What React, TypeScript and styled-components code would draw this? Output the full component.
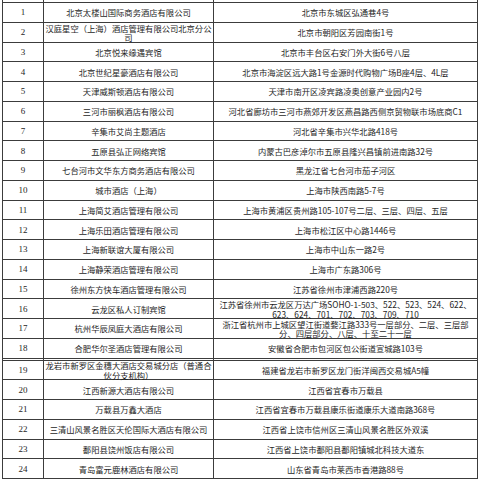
import styled, { createGlobalStyle } from "styled-components";

const GlobalStyle = createGlobalStyle`
  html, body {
    margin: 0;
    padding: 0;
    background: #ffffff;
  }
  body {
    font-family: "Noto Sans CJK SC", "Liberation Sans", sans-serif;
    color: #1e1e1e;
  }
`;

type Hotel = {
  no: number;
  name: string[];
  addr: string[];
};

const hotels: Hotel[] = [
  { no: 1, name: ["北京太楼山国际商务酒店有限公司"], addr: ["北京市东城区弘通巷4号"] },
  { no: 2, name: ["汉庭星空（上海）酒店管理有限公司北京分公", "司"], addr: ["北京市朝阳区芳园南街1号"] },
  { no: 3, name: ["北京悦来缘遇宾馆"], addr: ["北京市丰台区右安门外大街6号八层"] },
  { no: 4, name: ["北京世纪星豪酒店有限公司"], addr: ["北京市海淀区远大路1号金源时代购物广场B座4层、4L层"] },
  { no: 5, name: ["天津威斯顿酒店有限公司"], addr: ["天津市南开区凌宾路凌奥创意产业园内2号"] },
  { no: 6, name: ["三河市丽枫酒店有限公司"], addr: ["河北省廊坊市三河市燕郊开发区燕昌路西侧京贸物联市场底商C1"] },
  { no: 7, name: ["辛集市艾尚主题酒店"], addr: ["河北省辛集市兴华北路418号"] },
  { no: 8, name: ["五原县弘正网络宾馆"], addr: ["内蒙古巴彦淖尔市五原县隆兴昌镇前进南路32号"] },
  { no: 9, name: ["七台河市文华东方商务酒店有限公司"], addr: ["黑龙江省七台河市茄子河区"] },
  { no: 10, name: ["城市酒店（上海）"], addr: ["上海市陕西南路5-7号"] },
  { no: 11, name: ["上海简艾酒店管理有限公司"], addr: ["上海市黄浦区贵州路105-107号二层、三层、四层、五层"] },
  { no: 12, name: ["上海乐田酒店管理有限公司"], addr: ["上海市松江区中心路1446号"] },
  { no: 13, name: ["上海新联谊大厦有限公司"], addr: ["上海市中山东一路2号"] },
  { no: 14, name: ["上海静荣酒店管理有限公司"], addr: ["上海市广东路306号"] },
  { no: 15, name: ["徐州东方快车酒店管理有限公司"], addr: ["江苏省徐州市津浦西路220号"] },
  {
    no: 16,
    name: ["云龙区私人订制宾馆"],
    addr: ["江苏省徐州市云龙区万达广场SOHO-1-503、522、523、524、622、", "623、624、701、702、703、709、710"],
  },
  {
    no: 17,
    name: ["杭州华辰凤庭大酒店有限公司"],
    addr: ["浙江省杭州市上城区望江街道婺江路333号一层部分、二层、三层部", "分、四层部分、八层、十至二十一层"],
  },
  { no: 18, name: ["合肥华尔圣酒店管理有限公司"], addr: ["安徽省合肥市包河区包公街道宣城路103号"] },
  {
    no: 19,
    name: ["龙岩市新罗区金穗大酒店交易城分店（普通合", "伙分支机构）"],
    addr: ["福建省龙岩市新罗区龙门街洋闽西交易城A5幢"],
  },
  { no: 20, name: ["江西新源大酒店有限公司"], addr: ["江西省宜春市万载县"] },
  { no: 21, name: ["万载县万鑫大酒店"], addr: ["江西省宜春市万载县康乐街道康乐大道南路368号"] },
  { no: 22, name: ["三清山风景名胜区天伦国际大酒店有限公司"], addr: ["江西省上饶市信州区三清山风景名胜区外双溪"] },
  { no: 23, name: ["鄱阳县饶州饭店有限公司"], addr: ["江西省上饶市鄱阳县鄱阳镇城北科技大道东"] },
  { no: 24, name: ["青岛富元鹿林酒店有限公司"], addr: ["山东省青岛市莱西市香港路88号"] },
];

const Sheet = styled.div`
  display: grid;
  grid-template-columns: 41px 170px 264px;
  margin-left: 2px;
  border-left: 1px solid #3c3c3c;
  width: 476px;
`;

const Cell = styled.div<{ $h: number; $double?: boolean }>`
  box-sizing: border-box;
  height: ${(p) => p.$h}px;
  border-right: 1px solid #3c3c3c;
  border-bottom: ${(p) => (p.$double ? "3px double #3c3c3c" : "1px solid #3c3c3c")};
  display: flex;
  flex-direction: column;
  align-items: center;
  justify-content: center;
  overflow: visible;
`;

const Num = styled.span`
  font-family: "Liberation Serif", "DejaVu Serif", serif;
  font-size: 9px;
  line-height: 10px;
  color: #1e1e1e;
`;

const Line = styled.span<{ $tight?: boolean }>`
  display: block;
  font-size: 8.3px;
  line-height: 10px;
  height: ${(p) => (p.$tight ? "9.4px" : "10px")};
  white-space: nowrap;
  color: #1e1e1e;
`;

const ROW = 19.75;

export default function App() {
  return (
    <>
      <GlobalStyle />
      <Sheet>
        <Cell $h={3} />
        <Cell $h={3} />
        <Cell $h={3} />
        {hotels.map((h) => {
          const dbl = h.no === 18;
          const hh = dbl ? ROW + 2 : ROW;
          return [
            <Cell key={`n${h.no}`} $h={hh} $double={dbl}>
              <Num>{h.no}</Num>
            </Cell>,
            <Cell key={`a${h.no}`} $h={hh} $double={dbl}>
              {h.name.map((l, i) => (
                <Line key={i} $tight={h.name.length > 1}>
                  {l}
                </Line>
              ))}
            </Cell>,
            <Cell key={`b${h.no}`} $h={hh} $double={dbl}>
              {h.addr.map((l, i) => (
                <Line key={i} $tight={h.addr.length > 1}>
                  {l}
                </Line>
              ))}
            </Cell>,
          ];
        })}
      </Sheet>
    </>
  );
}
